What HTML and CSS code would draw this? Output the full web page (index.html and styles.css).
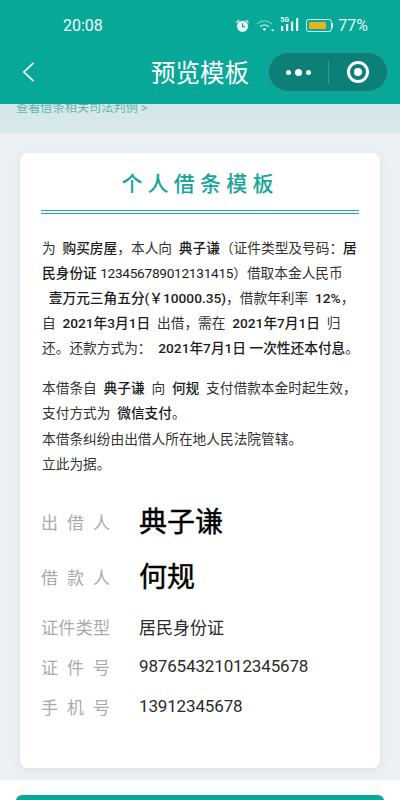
FILE: index.html
```html
<!DOCTYPE html>
<html lang="zh-CN">
<head>
  <meta charset="UTF-8" />
  <meta name="viewport" content="width=device-width, initial-scale=1.0"/>
  <title>预览模板</title>
  <link rel="stylesheet" href="styles.css">
</head>
<body>
  <div class="page">
    <header class="top-bar">
      <div class="status-bar">
        <span class="clock">20:08</span>
        <div class="status-icons">
          <svg class="icon-alarm" width="15" height="15" viewBox="0 0 15 15">
            <path d="M1 4.2 3.6 1.6 4.6 2.5 2 5.1Z M14 4.2 11.4 1.6 10.4 2.5 13 5.1Z" fill="#e6f5f3"/>
            <circle cx="7.5" cy="8.3" r="5.6" fill="#e6f5f3"/>
            <path d="M7.5 5.2V8.6H10" fill="none" stroke="#08a899" stroke-width="1.1"/>
          </svg>
          <svg class="icon-wifi" width="19" height="13" viewBox="0 0 19 13">
            <path d="M1 5C5.500 .8 11.500 .8 16 5" fill="none" stroke="#6fcbc1" stroke-width="1.3"/>
            <path d="M4 7.800C6.800 5.400 10.200 5.400 13 7.800" fill="none" stroke="#b6e4de" stroke-width="1.3"/>
            <circle cx="8.500" cy="10.300" r="1.300" fill="#fff"/>
            <path d="M15 10.500h3.500L16.750 12.500Z" fill="#d9f1ee"/>
          </svg>
          <div class="signal">
            <span class="signal-label">5G</span>
            <svg width="19" height="14" viewBox="0 0 19 14">
              <path d="M1 8h2.200v5H1Z M6 6h2.200v7H6Z M11 3.500h2.200V13H11Z M16 0h2.200v13H16Z" fill="#e6f5f3"/>
            </svg>
          </div>
          <div class="battery">
            <div class="battery-shell"><div class="battery-fill"></div></div>
            <div class="battery-cap"></div>
          </div>
          <span class="battery-text">77%</span>
        </div>
      </div>
      <div class="nav-bar">
        <svg class="back-icon" width="13" height="22" viewBox="0 0 14 24">
          <path d="M12.500 2 2 12 12.500 22" fill="none" stroke="#fff" stroke-width="1.800"/>
        </svg>
        <h1 class="nav-title">预览模板</h1>
        <div class="capsule">
          <div class="capsule-dots"><i></i><i class="big"></i><i></i></div>
          <div class="capsule-line"></div>
          <div class="capsule-target"><i></i></div>
        </div>
      </div>
    </header>

    <main class="content">
      <a class="case-link">查看借条相关司法判例 &gt;</a>
      <section class="card">
        <h2 class="card-title">个人借条模板</h2>
        <div class="double-line"></div>
        <div class="para">
          <div><span>为&nbsp;&nbsp;</span><b>购买房屋</b><span>，本人向&nbsp;&nbsp;</span><b>典子谦</b><span>（证件类型及号码：</span><b>居</b></div>
          <div><b>民身份证 <span class="num">123456789012131415</span></b><span>）借取本金人民币</span></div>
          <div><span>&nbsp;&nbsp;</span><b>壹万元三角五分(￥10000.35)</b><span>，借款年利率&nbsp;&nbsp;</span><b>12%</b><span>，</span></div>
          <div><span>自&nbsp;&nbsp;</span><b>2021年3月1日</b><span>&nbsp;&nbsp;出借，需在&nbsp;&nbsp;</span><b>2021年7月1日</b><span>&nbsp;&nbsp;归</span></div>
          <div><span>还。还款方式为：&nbsp;&nbsp;</span><b>2021年7月1日 一次性还本付息</b><span>。</span></div>
        </div>
        <div class="para para-second">
          <div><span>本借条自&nbsp;&nbsp;</span><b>典子谦</b><span>&nbsp;&nbsp;向&nbsp;&nbsp;</span><b>何规</b><span>&nbsp;&nbsp;支付借款本金时起生效，</span></div>
          <div><span>支付方式为&nbsp;&nbsp;</span><b>微信支付</b><span>。</span></div>
          <div><span>本借条纠纷由出借人所在地人民法院管辖。</span></div>
          <div><span>立此为据。</span></div>
        </div>
        <div class="info-list">
          <div class="info-row sign-row"><span class="info-label">出借人</span><span class="sign-name">典子谦</span></div>
          <div class="info-row sign-row"><span class="info-label">借款人</span><span class="sign-name">何规</span></div>
          <div class="info-row"><span class="info-label">证件类型</span><span class="info-value">居民身份证</span></div>
          <div class="info-row"><span class="info-label">证件号</span><span class="info-value number">987654321012345678</span></div>
          <div class="info-row"><span class="info-label">手机号</span><span class="info-value number">13912345678</span></div>
        </div>
      </section>
    </main>

    <footer class="bottom-bar">
      <button class="main-button"></button>
    </footer>
  </div>
</body>
</html>
```

FILE: styles.css
```css
* {
  margin: 0;
  padding: 0;
  box-sizing: border-box;
  font-family: Roboto, "Noto Sans CJK SC", sans-serif;
}

body {
  background-color: #fff;
}

.page {
  width: 400px;
  height: 800px;
  overflow: hidden;
}

.top-bar {
  position: relative;
  z-index: 2;
  height: 104px;
  background-color: #08a899;
  color: #fff;
}

.status-bar {
  height: 50px;
  padding: 0 32px 0 63px;
  display: flex;
  justify-content: space-between;
  align-items: center;
}

.clock {
  font-size: 16px;
  color: #f0faf8;
}

.status-icons {
  display: flex;
  align-items: center;
}

.icon-alarm {
  margin-right: 6px;
}

.icon-wifi {
  margin-right: 5px;
}

.signal {
  position: relative;
  width: 19px;
  height: 14px;
  margin-right: 7px;
}

.signal svg {
  display: block;
}

.signal-label {
  position: absolute;
  left: 0;
  top: -2px;
  font-size: 7px;
  line-height: 8px;
  font-weight: 700;
  color: #e6f5f3;
}

.battery {
  display: flex;
  align-items: center;
  margin-right: 5px;
}

.battery-shell {
  width: 26px;
  height: 13px;
  padding: 2px;
  border: 1px solid #cfeee9;
  border-radius: 3px;
}

.battery-fill {
  width: 17px;
  height: 100%;
  background-color: #e3b51f;
  border-radius: 1px;
}

.battery-cap {
  width: 1px;
  height: 5px;
  background-color: #cfeee9;
}

.battery-text {
  font-size: 16px;
  color: #e6f5f3;
}

.nav-bar {
  position: relative;
  height: 44px;
  padding: 0 12px 0 22px;
  display: flex;
  align-items: center;
  justify-content: space-between;
}

.nav-title {
  position: absolute;
  left: 0;
  right: 0;
  top: 6px;
  text-align: center;
  font-size: 24.5px;
  line-height: 36px;
  font-weight: 400;
  color: #fff;
  pointer-events: none;
}

.capsule {
  width: 120px;
  height: 40px;
  display: flex;
  align-items: center;
  background-color: #0c7f76;
  border: 1px solid #2d9d92;
  border-radius: 20px;
}

.capsule-dots {
  width: 59px;
  display: flex;
  align-items: center;
  justify-content: center;
  gap: 4px;
}

.capsule-dots i {
  width: 5px;
  height: 5px;
  border-radius: 50%;
  background-color: #fff;
}

.capsule-dots i.big {
  width: 7px;
  height: 7px;
}

.capsule-line {
  width: 1px;
  height: 23px;
  background-color: #2d9d92;
}

.capsule-target {
  flex: 1;
  display: flex;
  justify-content: center;
}

.capsule-target i {
  width: 22px;
  height: 22px;
  border: 3px solid #fff;
  border-radius: 50%;
  display: flex;
  align-items: center;
  justify-content: center;
}

.capsule-target i::after {
  content: "";
  width: 8px;
  height: 8px;
  border-radius: 50%;
  background-color: #fff;
}

.content {
  height: 676px;
  padding: 0 20px;
  background: linear-gradient(to bottom, #d5e7e8 0, #d8e8ea 29px, #eaf0f3 29px);
}

.case-link {
  display: block;
  height: 29px;
  margin: 0 -4px 20px;
  font-size: 12.2px;
  line-height: 8px;
  color: #5cb5ae;
}

.card {
  height: 615px;
  padding: 0 21px;
  background-color: #fff;
  border-radius: 8px;
  box-shadow: 0 2px 8px rgba(120, 140, 150, 0.1);
}

.card-title {
  padding-top: 16px;
  text-align: center;
  font-size: 21px;
  line-height: 30px;
  font-weight: 500;
  letter-spacing: 5.2px;
  color: #17a598;
}

.double-line {
  height: 4px;
  margin: 11px 0 22px;
  border-top: 1px solid #2aa79e;
  border-bottom: 1px solid #2aa79e;
}

.para {
  margin-left: 1px;
  font-size: 13.7px;
  line-height: 25px;
  color: #333;
  white-space: nowrap;
}

.para b {
  font-weight: 500;
  color: #1c1c1c;
}

.para .num {
  font-weight: 400;
  letter-spacing: -0.3px;
}

.para-second {
  margin-top: 15px;
  line-height: 25.3px;
}

.info-list {
  margin-top: 17px;
}

.info-row {
  display: flex;
  align-items: center;
  height: 40px;
}

.sign-row {
  height: 55px;
}

.sign-row + .info-row:not(.sign-row) {
  margin-top: 2px;
}

.info-label {
  width: 98px;
  padding-right: 29px;
  font-size: 17px;
  color: #aaa;
  text-align-last: justify;
}

.info-value {
  font-size: 17px;
  color: #2a2a2a;
}

.info-value.number {
  letter-spacing: -0.15px;
}

.sign-name {
  margin-bottom: 4px;
  font-size: 28px;
  font-weight: 400;
  color: #000;
  -webkit-text-stroke: 0.4px #000;
}

.bottom-bar {
  height: 20px;
  padding: 15px 16px 0;
  background-color: #fff;
}

.main-button {
  display: block;
  width: 100%;
  height: 44px;
  background-color: #08a899;
  border: none;
  border-radius: 6px;
}
```
